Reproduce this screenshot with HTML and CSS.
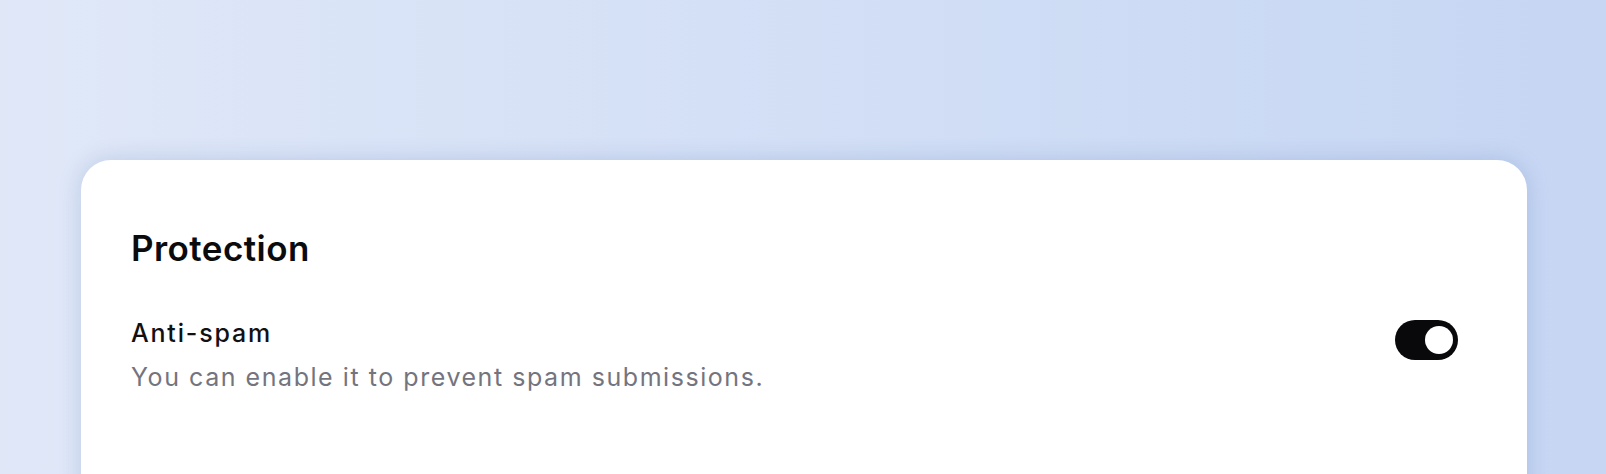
FILE: index.html
```html
<!DOCTYPE html>
<html lang="en">
<head>
<meta charset="utf-8">
<title>Protection</title>
<link rel="stylesheet" href="styles.css">
</head>
<body>
<main class="page">
  <section class="card">
    <h2 class="card-title">Protection</h2>
    <div class="setting">
      <div class="setting-text">
        <div class="setting-label">Anti-spam</div>
        <div class="setting-desc">You can enable it to prevent spam submissions.</div>
      </div>
      <button class="toggle is-on" type="button" role="switch" aria-checked="true" aria-label="Anti-spam"><span class="toggle-knob"></span></button>
    </div>
  </section>
</main>
</body>
</html>
```
FILE: styles.css
```css
* { box-sizing: border-box; }
html, body { margin: 0; padding: 0; }
body {
  width: 1606px;
  height: 474px;
  overflow: hidden;
  background: linear-gradient(90deg, #e0e8f8 0%, #d4e0f6 45%, #c6d6f3 100%);
  font-family: Inter, "Noto Sans", sans-serif;
}
.page {
  padding: 160px 79px 0 81px;
}
.card {
  background: #ffffff;
  border-radius: 30px;
  min-height: 400px;
  padding: 68px 50px 0 50px;
  box-shadow: 0 0 22px rgba(70, 100, 170, 0.22);
}
.card-title {
  margin: 0;
  font-size: 35px;
  line-height: 40px;
  font-weight: 600;
  color: #0b0b0d;
  letter-spacing: 0.45px;
}
.setting {
  margin-top: 49px;
  display: flex;
  align-items: flex-start;
  justify-content: space-between;
}
.setting-label {
  font-size: 25px;
  line-height: 32px;
  font-weight: 500;
  color: #111114;
  letter-spacing: 1.8px;
}
.setting-desc {
  margin-top: 12px;
  font-size: 25px;
  line-height: 32px;
  font-weight: 400;
  color: #74747e;
  letter-spacing: 1.55px;
}
.toggle {
  margin: 3px 19px 0 0;
  width: 63px;
  height: 40px;
  border: 0;
  padding: 0 5px;
  border-radius: 20px;
  background: #09090b;
  display: flex;
  align-items: center;
  justify-content: flex-end;
  cursor: pointer;
}
.toggle-knob {
  width: 28px;
  height: 28px;
  border-radius: 50%;
  background: #ffffff;
}
```
